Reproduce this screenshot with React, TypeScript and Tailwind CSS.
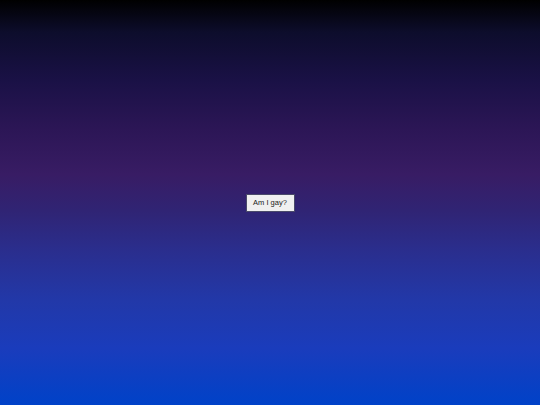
export default function App() {
  return (
    <main className="h-[405px] w-full flex items-center justify-center bg-[linear-gradient(to_bottom,#000000_0%,#0d0d2c_8%,#1a1146_20%,#2c1656_32%,#381c64_43%,#302474_52%,#2a2e8e_62%,#2238a8_74%,#1a3cbc_86%,#0042c8_100%)] font-['Liberation_Sans',Arial,sans-serif]">
      <button className="h-[18px] w-[49px] flex items-center justify-center bg-[#f0f0f0] border border-[#4a4a6a] text-[7.5px] text-[#1a1a1a] leading-none">
        Am I gay?
      </button>
    </main>
  );
}
